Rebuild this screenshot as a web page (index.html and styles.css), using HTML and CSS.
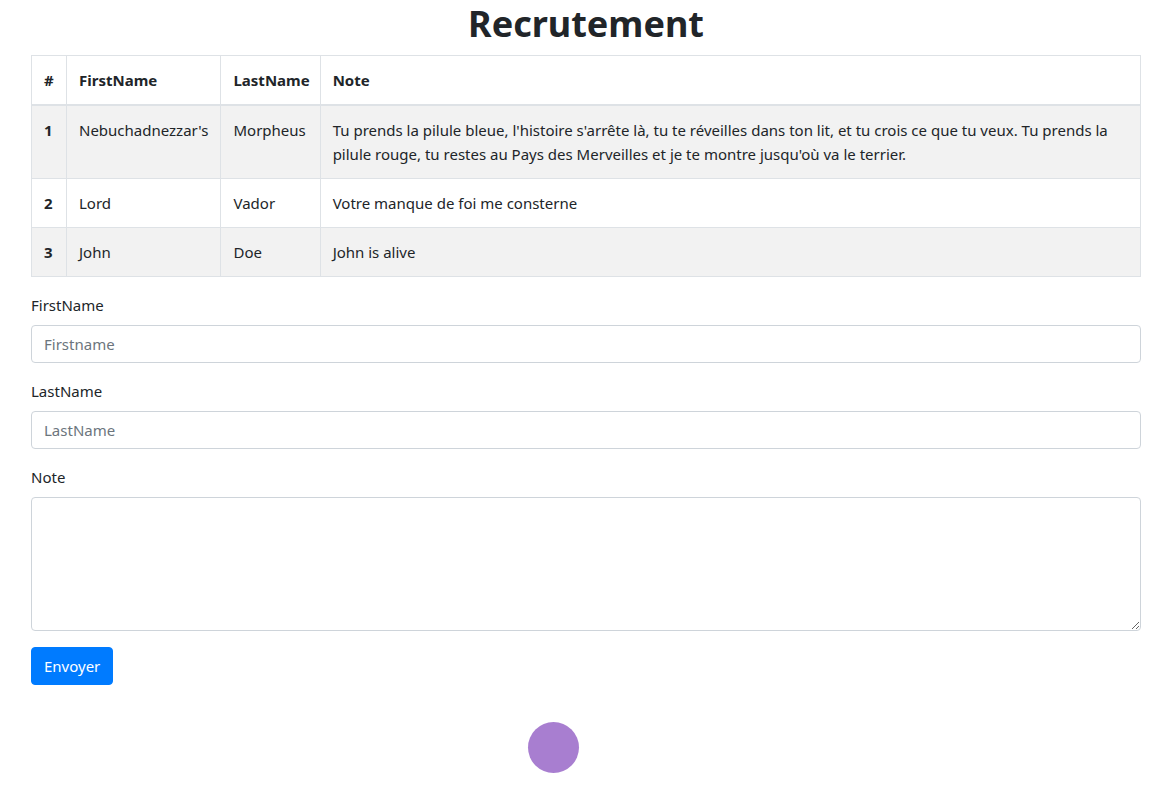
FILE: index.html
```html
<!DOCTYPE html>
<html lang="fr">
<head>
<meta charset="utf-8">
<title>Recrutement</title>
<link rel="stylesheet" href="styles.css">
</head>
<body>
<main class="container">
  <h1 class="title">Recrutement</h1>
  <table class="table">
    <thead>
      <tr>
        <th class="col-id">#</th>
        <th class="col-first">FirstName</th>
        <th class="col-last">LastName</th>
        <th class="col-note">Note</th>
      </tr>
    </thead>
    <tbody>
      <tr class="striped">
        <th>1</th>
        <td>Nebuchadnezzar's</td>
        <td>Morpheus</td>
        <td>Tu prends la pilule bleue, l'histoire s'arrête là, tu te réveilles dans ton lit, et tu crois ce que tu veux. Tu prends la pilule rouge, tu restes au Pays des Merveilles et je te montre jusqu'où va le terrier.</td>
      </tr>
      <tr>
        <th>2</th>
        <td>Lord</td>
        <td>Vador</td>
        <td>Votre manque de foi me consterne</td>
      </tr>
      <tr class="striped">
        <th>3</th>
        <td>John</td>
        <td>Doe</td>
        <td>John is alive</td>
      </tr>
    </tbody>
  </table>
  <form class="form">
    <div class="form-group">
      <label class="label" for="first">FirstName</label>
      <input class="control" id="first" type="text" placeholder="Firstname">
    </div>
    <div class="form-group">
      <label class="label" for="last">LastName</label>
      <input class="control" id="last" type="text" placeholder="LastName">
    </div>
    <div class="form-group">
      <label class="label" for="note">Note</label>
      <textarea class="control area" id="note" rows="5"></textarea>
    </div>
    <button class="btn" type="button">Envoyer</button>
  </form>
  <div class="loader-row">
    <div class="loader"></div>
  </div>
</main>
</body>
</html>
```
FILE: styles.css
```css
* { box-sizing: border-box; }
html, body { margin: 0; padding: 0; }
body {
  font-family: "Noto Sans", "Open Sans", sans-serif;
  font-size: 16px;
  line-height: 1.5;
  color: #212529;
  background: #fff;
}
.container {
  padding: 0 33px 0 31px;
}
.title {
  margin: 0 0 7px;
  font-size: 36px;
  font-weight: 700;
  line-height: 48px;
  text-align: center;
}
.table {
  width: 100%;
  border-collapse: collapse;
  margin-bottom: 16px;
  font-size: 15px;
}
.table th, .table td {
  border: 1px solid #dee2e6;
  padding: 12px;
  text-align: left;
  vertical-align: top;
  line-height: 24px;
}
.table th { font-weight: 700; }
.table thead th { border-bottom: 2px solid #dee2e6; }
.table .striped { background: #f2f2f2; }
.col-id { width: 35px; }
.col-first { width: 154px; }
.table .col-last { width: 99px; padding-left: 12px; padding-right: 10px; }
.form-group { margin-bottom: 16px; }
.label {
  display: block;
  margin-bottom: 8px;
  font-size: 15px;
  line-height: 24px;
}
.control {
  display: block;
  width: 100%;
  height: 38px;
  padding: 6px 12px;
  font: inherit;
  font-size: 15px;
  color: #495057;
  background: #fff;
  border: 1px solid #ced4da;
  border-radius: 4px;
}
.control::placeholder { color: #6c757d; }
.area {
  height: 134px;
  resize: vertical;
}
.btn {
  display: inline-block;
  height: 38px;
  padding: 6px 12px;
  font: inherit;
  font-size: 15px;
  color: #fff;
  background: #007bff;
  border: 1px solid #007bff;
  border-radius: 4px;
}
.loader-row {
  display: flex;
  padding: 37px 0 0 497px;
}
.loader {
  width: 51px;
  height: 51px;
  border-radius: 50%;
  background: #a87ed0;
}
```
